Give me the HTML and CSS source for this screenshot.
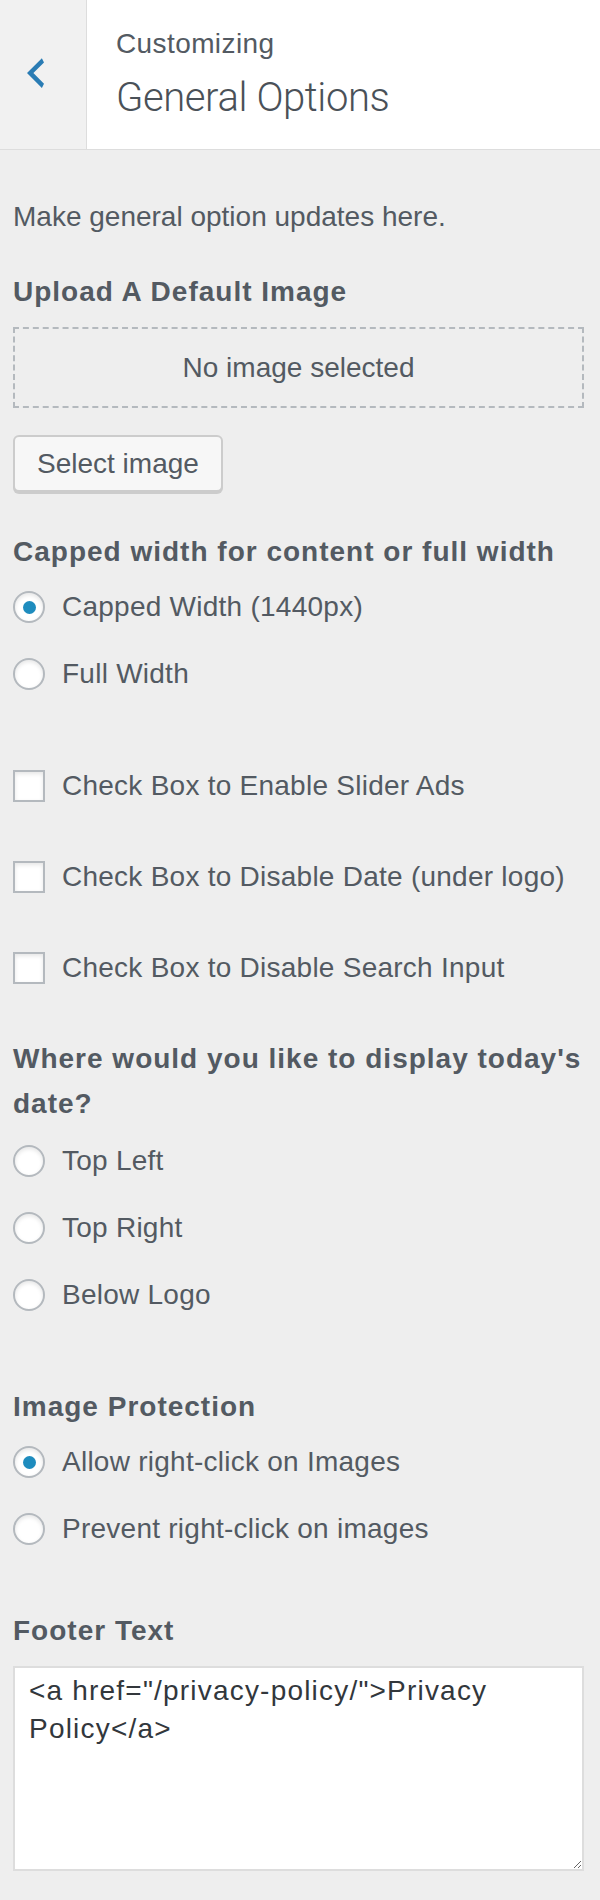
FILE: index.html
```html
<!DOCTYPE html>
<html lang="en">
<head>
  <meta charset="UTF-8" />
  <title>Customizing General Options</title>
  <link rel="stylesheet" href="styles.css">
</head>
<body>

<header class="panel-head">
  <a class="back" href="#" aria-label="Back">
    <svg width="17" height="30" viewBox="6 3 8 14"><path d="M14 5l-5 5 5 5-1 2-7-7 7-7z" fill="#2a7cb4"/></svg>
  </a>
  <div class="head-titles">
    <span class="head-action">Customizing</span>
    <h1 class="head-title">General Options</h1>
  </div>
</header>

<div class="controls">
  <p class="desc">Make general option updates here.</p>

  <div class="control">
    <h2 class="control-title">Upload A Default Image</h2>
    <div class="placeholder">No image selected</div>
    <button class="btn">Select image</button>
  </div>

  <div class="control control-radio">
    <h2 class="control-title">Capped width for content or full width</h2>
    <label class="option"><input type="radio" name="width" checked> Capped Width (1440px)</label>
    <label class="option"><input type="radio" name="width"> Full Width</label>
  </div>

  <div class="control control-check">
    <label class="option"><input type="checkbox"> Check Box to Enable Slider Ads</label>
  </div>
  <div class="control control-check">
    <label class="option"><input type="checkbox"> Check Box to Disable Date (under logo)</label>
  </div>
  <div class="control control-check last">
    <label class="option"><input type="checkbox"> Check Box to Disable Search Input</label>
  </div>

  <div class="control control-radio">
    <h2 class="control-title wrap">Where would you like to display today's date?</h2>
    <label class="option"><input type="radio" name="date"> Top Left</label>
    <label class="option"><input type="radio" name="date"> Top Right</label>
    <label class="option"><input type="radio" name="date"> Below Logo</label>
  </div>

  <div class="control control-radio" id="image-protection">
    <h2 class="control-title">Image Protection</h2>
    <label class="option"><input type="radio" name="protect" checked> Allow right-click on Images</label>
    <label class="option"><input type="radio" name="protect"> Prevent right-click on images</label>
  </div>

  <div class="control">
    <h2 class="control-title">Footer Text</h2>
    <textarea class="footer-text">&lt;a href="/privacy-policy/"&gt;Privacy Policy&lt;/a&gt;</textarea>
  </div>
</div>

</body>
</html>
```

FILE: styles.css
```css
body {
  margin: 0;
  background: #eeeeee;
  font-family: "Liberation Sans", Arial, sans-serif;
  font-size: 28px;
  color: #535a62;
}

/* header */
.panel-head {
  display: flex;
  height: 149px;
  background: #fff;
  border-bottom: 1px solid #ddd;
}
.back {
  flex: none;
  width: 59px;
  padding: 0 0 4px 27px;
  display: flex;
  align-items: center;
  background: #f1f1f1;
  border-right: 1px solid #ddd;
}
.head-titles {
  padding: 24px 0 0 29px;
}
.head-action {
  display: block;
  line-height: 40px;
  letter-spacing: 0.4px;
}
.head-title {
  margin: 10px 0 0;
  font-family: Roboto, sans-serif;
  font-weight: 300;
  font-size: 40px;
  line-height: 48px;
  letter-spacing: -0.4px;
  color: #4a5158;
}

/* controls */
.controls {
  padding: 47px 16px 40px 13px;
}
.desc {
  margin: 0 0 35px;
  line-height: 40px;
}
.control {
  margin-bottom: 40px;
}
.control-radio {
  margin-bottom: 72px;
}
#image-protection {
  margin-bottom: 62px;
}
.control-check {
  margin-bottom: 51px;
}
.control-check.last {
  margin-bottom: 48px;
}
.control-title {
  margin: 0 0 15px;
  font-size: 28px;
  font-weight: 700;
  line-height: 40px;
  letter-spacing: 1px;
}
.control-title.wrap {
  line-height: 45px;
}

.placeholder {
  height: 77px;
  line-height: 77px;
  text-align: center;
  border: 2px dashed #b4b9be;
  margin-bottom: 27px;
}
.btn {
  height: 57px;
  padding: 0 22px;
  font-family: inherit;
  font-size: 28px;
  color: #535a62;
  background: #f7f7f7;
  border: 2px solid #ccc;
  border-radius: 6px;
  box-shadow: 0 2px 0 #ccc;
}

.option {
  display: flex;
  align-items: center;
  gap: 17px;
  height: 40px;
  line-height: 40px;
  letter-spacing: 0.25px;
  margin-bottom: 27px;
}
.option:last-child {
  margin-bottom: 0;
}
.option input {
  appearance: none;
  flex: none;
  width: 32px;
  height: 32px;
  margin: 0;
  background: #fff;
  border: 2px solid #b4b9be;
  box-shadow: inset 0 2px 4px rgba(0,0,0,0.1);
}
.option input[type="radio"] {
  border-radius: 50%;
  display: grid;
  place-items: center;
}
.option input[type="radio"]:checked::before {
  content: "";
  width: 13px;
  height: 13px;
  border-radius: 50%;
  background: #1e8cbe;
}

.footer-text {
  display: block;
  box-sizing: border-box;
  width: 100%;
  height: 205px;
  margin: 0;
  padding: 4px 14px;
  font-family: inherit;
  font-size: 28px;
  line-height: 38px;
  letter-spacing: 1.2px;
  color: #32373c;
  background: #fff;
  border: 2px solid #ddd;
  resize: vertical;
}
```
